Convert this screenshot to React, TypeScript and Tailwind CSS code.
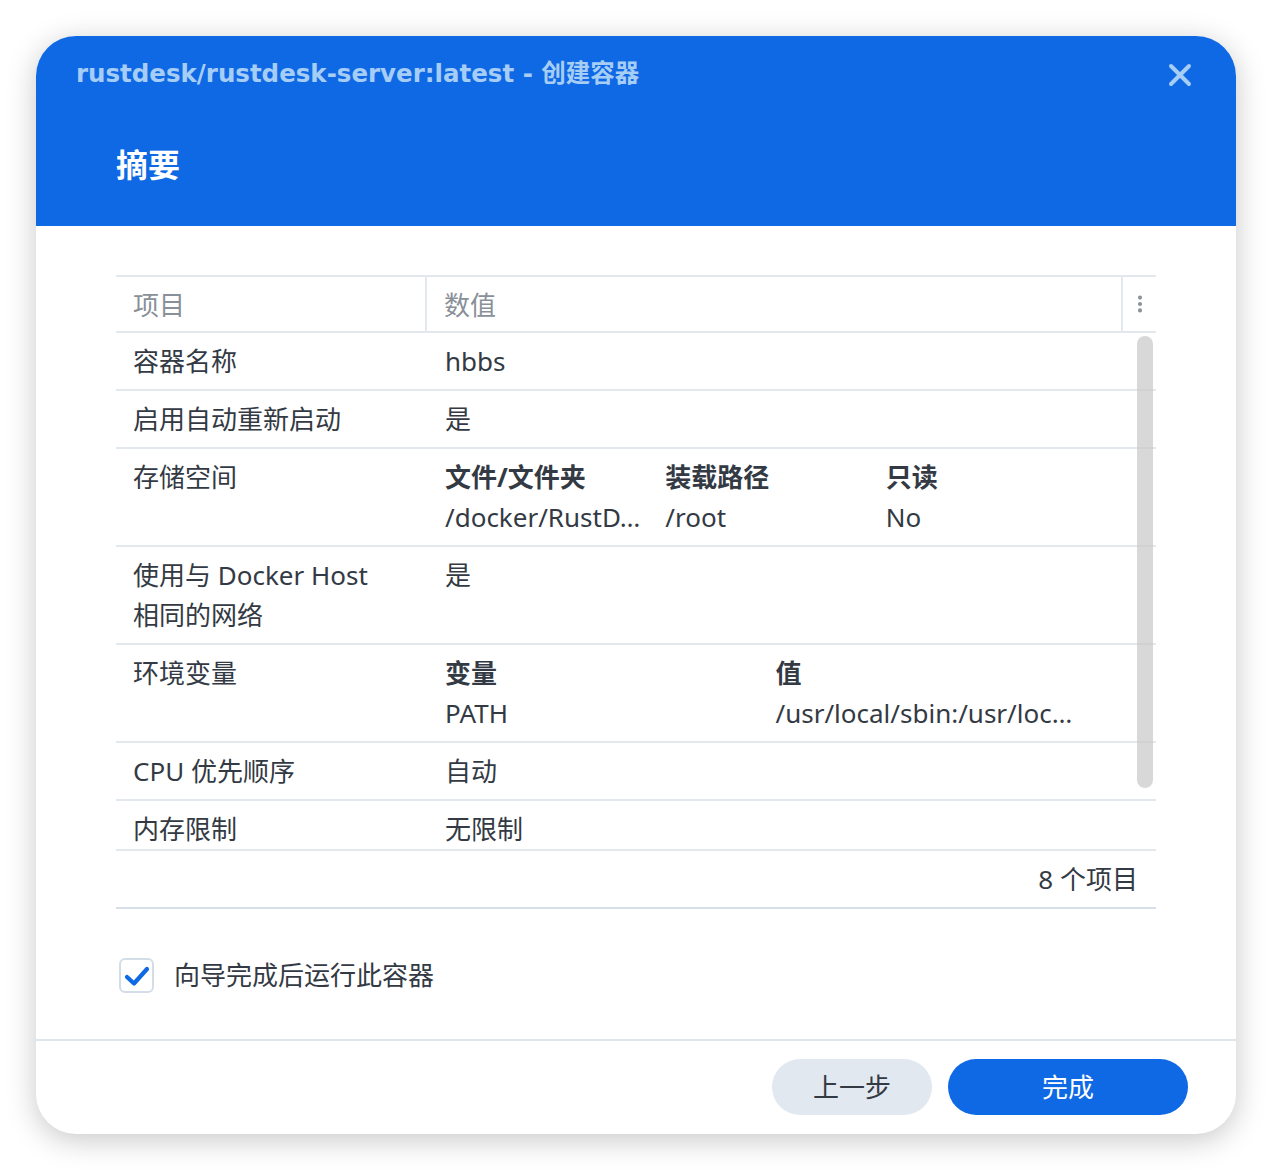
import { MoreVertical } from 'lucide-react';

const font = "font-['Noto_Sans','Noto_Sans_CJK_SC',sans-serif]";

const Row = ({ label, children, tall }: { label: React.ReactNode; children: React.ReactNode; tall?: boolean }) => (
  <div className={`flex border-b-2 border-[#e3e8ee] ${tall ? 'min-h-[98px]' : 'h-[58px]'}`}>
    <div className="w-[311px] shrink-0 pl-[17px] pt-[8px] leading-[40px]">{label}</div>
    <div className="flex-1 pl-[18px] pr-[50px] pt-[8px] leading-[40px] min-w-0">{children}</div>
  </div>
);

export default function App() {
  return (
    <div className={`min-h-[1170px] bg-white p-[36px] ${font}`}>
      <div className="w-[1200px] h-[1098px] rounded-[40px] bg-white overflow-hidden flex flex-col shadow-[0_6px_30px_rgba(0,0,0,0.22)]">
        {/* header */}
        <div className="h-[190px] bg-[#1069e4] shrink-0 relative">
          <div className="flex items-center justify-between pl-[40px] pr-[44px] pt-[20px]">
            <span className="font-['DejaVu_Sans','Noto_Sans_CJK_SC',sans-serif] font-bold text-[24.5px] text-[#a6cdf6]">
              rustdesk/rustdesk-server:latest - 创建容器
            </span>
            <svg width="24" height="24" viewBox="0 0 24 24" className="mt-[2px]">
              <path d="M3 3 L21 21 M21 3 L3 21" stroke="#a6cdf6" strokeWidth="4" strokeLinecap="round" />
            </svg>
          </div>
          <div className="pl-[80px] pt-[56px] text-[32px] font-bold text-white leading-none">摘要</div>
        </div>

        {/* body */}
        <div className="flex-1 px-[80px] pt-[49px] text-[26px] text-[#333a44]">
          <div className="relative">
            <div className="flex h-[58px] border-t-2 border-b-2 border-[#e3e8ee] text-[#8a9099]">
              <div className="w-[311px] shrink-0 pl-[17px] pt-[8px] leading-[40px] border-r-2 border-[#e3e8ee]">项目</div>
              <div className="flex-1 pl-[17px] pt-[8px] leading-[40px] border-r-2 border-[#e3e8ee]">数值</div>
              <div className="w-[33px] flex items-center justify-center">
                <MoreVertical size={22} strokeWidth={2.5} className="text-[#8a9099]" />
              </div>
            </div>

            <Row label="容器名称">hbbs</Row>
            <Row label="启用自动重新启动">是</Row>
            <Row label="存储空间" tall>
              <div className="grid grid-cols-3">
                <div className="font-bold">文件/文件夹</div>
                <div className="font-bold">装载路径</div>
                <div className="font-bold">只读</div>
                <div className="whitespace-nowrap">/docker/RustD…</div>
                <div>/root</div>
                <div>No</div>
              </div>
            </Row>
            <Row label={<span>使用与 Docker Host<br />相同的网络</span>} tall>是</Row>
            <Row label="环境变量" tall>
              <div className="grid grid-cols-2">
                <div className="font-bold">变量</div>
                <div className="font-bold">值</div>
                <div>PATH</div>
                <div className="whitespace-nowrap">/usr/local/sbin:/usr/loc…</div>
              </div>
            </Row>
            <Row label="CPU 优先顺序">自动</Row>
            <div className="flex h-[50px] border-b-2 border-[#e3e8ee]">
              <div className="w-[311px] shrink-0 pl-[17px] pt-[8px] leading-[40px]">内存限制</div>
              <div className="flex-1 pl-[18px] pt-[8px] leading-[40px]">无限制</div>
            </div>
            <div className="h-[58px] flex items-center justify-end pr-[18px] border-b-2 border-[#d7dfe8]">8 个项目</div>

            {/* scrollbar */}
            <div className="absolute left-[1021px] top-[61px] w-[16px] h-[452px] rounded-full bg-[#c8c8c8]/70" />
          </div>

          {/* checkbox */}
          <div className="flex items-center mt-[47px] ml-[3px]">
            <div className="w-[35px] h-[35px] rounded-[6px] border-2 border-[#d3dde8] flex items-center justify-center">
              <svg width="26" height="22" viewBox="0 0 26 22">
                <path d="M3 12 L10 18.5 L23 4" fill="none" stroke="#1069e4" strokeWidth="4.2" strokeLinecap="round" strokeLinejoin="round" />
              </svg>
            </div>
            <span className="ml-[20px]">向导完成后运行此容器</span>
          </div>
        </div>

        {/* footer */}
        <div className="h-[95px] shrink-0 border-t-2 border-[#dde5ee] flex items-start justify-end gap-[16px] pr-[48px] pt-[18px]">
          <button className="w-[160px] h-[56px] rounded-full bg-[#e2e8f0] text-[26px] text-[#333a44]">上一步</button>
          <button className="w-[240px] h-[56px] rounded-full bg-[#1069e4] text-[26px] text-white">完成</button>
        </div>
      </div>
    </div>
  );
}
